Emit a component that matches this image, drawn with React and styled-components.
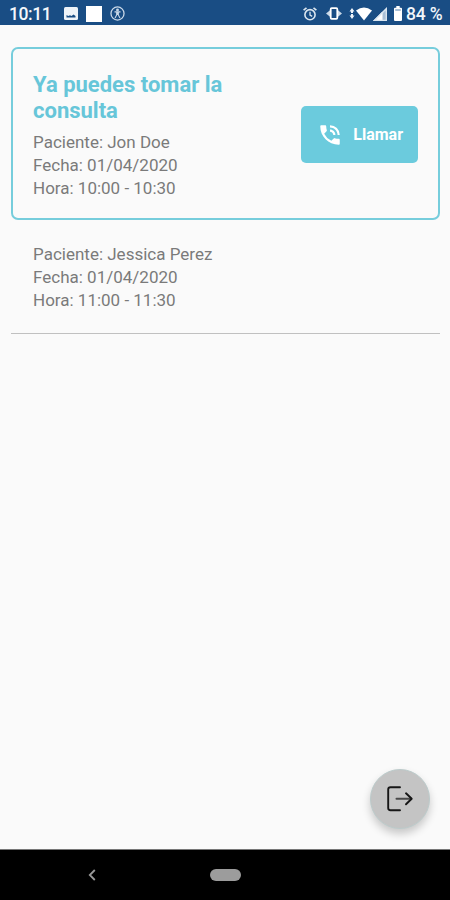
import React from 'react'
import styled, { createGlobalStyle } from 'styled-components'
import { MdPhoneInTalk } from 'react-icons/md'

const GlobalStyle = createGlobalStyle`
  * {
    box-sizing: border-box;
  }

  body {
    margin: 0;
    background: #fafafa;
    font-family: Roboto, sans-serif;
  }
`

const Screen = styled.div`
  display: flex;
  flex-direction: column;
  width: 450px;
  height: 900px;
  overflow: hidden;
  background: #fafafa;
`

const StatusBar = styled.header`
  display: flex;
  align-items: center;
  justify-content: space-between;
  flex: none;
  height: 25px;
  padding: 2px 8px 0 9px;
  background: #194d84;
  color: #f3f7fb;
`

const StatusGroup = styled.div`
  display: flex;
  align-items: center;
`

const StatusText = styled.span`
  width: ${props => props.width}px;
  margin-left: ${props => props.gap || 0}px;
  font-size: 17.5px;
  font-weight: 500;
  line-height: 22px;
  letter-spacing: ${props => props.spacing || 0}px;
  white-space: nowrap;
`

const StatusIcon = styled.svg`
  display: block;
  flex: none;
  margin-left: ${props => props.gap || 0}px;
`

const WhiteSquare = styled.span`
  width: 16px;
  height: 16px;
  margin-left: 8px;
  background: #fff;
`

const Content = styled.main`
  display: flex;
  flex-direction: column;
  flex: 1;
  padding: 22px 10px 20px 11px;
`

const Appointment = styled.section`
  display: flex;
  align-items: center;
  justify-content: space-between;
  flex: none;
  height: ${props => (props.active ? 173 : 114)}px;
  padding: ${props => (props.active ? '1px 20px 0' : '2px 22px 0')};
  border: ${props => (props.active ? '2px solid #76cddc' : 'none')};
  border-bottom: ${props => (!props.active ? '1px solid #c0c0c0' : null)};
  border-radius: ${props => (props.active ? 7 : 0)}px;
`

const Summary = styled.div`
  padding-top: ${props => (props.active ? 4 : 0)}px;
`

const Title = styled.h2`
  width: 220px;
  margin: 0 0 7px;
  color: #67c6d9;
  font-size: 22px;
  font-weight: 700;
  line-height: 26px;
`

const Detail = styled.p`
  margin: 0;
  color: #7a7a7a;
  font-size: 17px;
  line-height: 23.2px;
`

const CallButton = styled.button`
  display: flex;
  align-items: center;
  justify-content: space-between;
  width: 117px;
  height: 57px;
  padding: 1px 15px 0 16px;
  border: 0;
  border-radius: 5px;
  background: #6bcbdd;
  color: #fff;
  font-family: inherit;
  font-size: 16px;
  font-weight: 700;
`

const LogoutButton = styled.button`
  display: flex;
  align-items: center;
  justify-content: center;
  width: 60px;
  height: 60px;
  margin: auto 10px 0 auto;
  padding: 0;
  border: 1px solid #bccbcb;
  border-radius: 50%;
  background: #c4c4c4;
  box-shadow: 0 5px 8px rgba(0, 0, 0, 0.2);
`

const NavBar = styled.nav`
  display: flex;
  align-items: center;
  flex: none;
  height: 51px;
  padding-left: 87px;
  border-top: 1px solid #777;
  background: #000;
`

const HomePill = styled.span`
  width: 31px;
  height: 12px;
  margin-left: 113px;
  border-radius: 6px;
  background: #9c9c9c;
`

const appointments = [
  { patient: 'Jon Doe', date: '01/04/2020', time: '10:00 - 10:30', active: true },
  { patient: 'Jessica Perez', date: '01/04/2020', time: '11:00 - 11:30', active: false },
]

const Status = () => (
  <StatusBar>
    <StatusGroup>
      <StatusText width={55} spacing={-0.4}>
        10:11
      </StatusText>
      <StatusIcon width="14" height="13" viewBox="0 0 14 13">
        <rect width="14" height="13" rx="1.5" fill="#eef3f8" />
        <path d="M2.500 10.500V8l1.800 1 1.700-.8 1.500.8L9.500 7.500l2 1.500v1.500z" fill="#194d84" />
      </StatusIcon>
      <WhiteSquare />
      <StatusIcon gap={8} width="15" height="15" viewBox="0 0 14 14" fill="none" stroke="#c9d8e8">
        <circle cx="7" cy="7" r="6.1" strokeWidth="1.2" />
        <circle cx="7" cy="3.7" r="0.8" fill="#c9d8e8" />
        <path d="M4.2 5.5h5.6M7 5.5v3M6.2 5.5v2.8l-1.5 3M7.8 5.5v2.8l1.5 3" />
      </StatusIcon>
    </StatusGroup>
    <StatusGroup>
      <StatusIcon width="14" height="14" viewBox="0 0 14 14" fill="none" stroke="#dbe6f0">
        <circle cx="7" cy="7.7" r="5.1" strokeWidth="1.6" />
        <path d="M7 4.8v3.3l2.2 1.3" strokeWidth="1.3" />
        <path d="M.6 3.2 3.5.8M13.4 3.2 10.5.8" strokeWidth="1.6" />
      </StatusIcon>
      <StatusIcon gap={9} width="16" height="13" viewBox="0 0 16 13">
        <path d="M4 3.2v6.6L0 6.5zM12 3.2v6.6l4-3.3z" fill="#c9d8e8" />
        <rect x="4.7" y="1.2" width="6.6" height="10.6" rx="1" fill="#194d84" stroke="#fff" strokeWidth="1.8" />
      </StatusIcon>
      <StatusIcon gap={7} width="6" height="14" viewBox="0 0 6 14" fill="#eef3f8">
        <path d="M3 1l2.500 3.500H4v1.500H2V4.500H.5zM3 12l2.500-3.500H4V7H2v1.500H.5z" />
      </StatusIcon>
      <StatusIcon gap={1} width="16" height="14" viewBox="0 0 16 14">
        <path d="M8 13.500 0 3.600Q8-2.600 16 3.600z" fill="#fff" />
      </StatusIcon>
      <StatusIcon gap={1} width="14" height="14" viewBox="0 0 14 14">
        <path d="M14 0v14H0z" fill="#a9bfd6" />
        <path d="M9.500 4.500V14H0z" fill="#fff" />
        <path d="M13.300 1.700v11.600H1.700z" fill="none" stroke="#dbe6f0" strokeWidth="1.300" />
      </StatusIcon>
      <StatusIcon gap={7} width="8" height="15" viewBox="0 0 8 15">
        <path
          d="M2.300 0h3.400v1.700H7a1 1 0 0 1 1 1V14a1 1 0 0 1-1 1H1a1 1 0 0 1-1-1V2.700a1 1 0 0 1 1-1h1.300z"
          fill="#fff"
        />
        <path d="M1.200 3h5.600v2H1.200z" fill="#a9bfd6" />
      </StatusIcon>
      <StatusText width={36} gap={4} spacing={-0.2}>
        84 %
      </StatusText>
    </StatusGroup>
  </StatusBar>
)

const AppointmentItem = props => (
  <Appointment active={props.active}>
    <Summary active={props.active}>
      {props.active && <Title>Ya puedes tomar la consulta</Title>}
      <Detail>Paciente: {props.patient}</Detail>
      <Detail>Fecha: {props.date}</Detail>
      <Detail>Hora: {props.time}</Detail>
    </Summary>
    {props.active && (
      <CallButton>
        <MdPhoneInTalk size={26} />
        Llamar
      </CallButton>
    )}
  </Appointment>
)

const App = () => (
  <>
    <GlobalStyle />
    <Screen>
      <Status />
      <Content>
        {appointments.map(item => (
          <AppointmentItem key={item.patient} {...item} />
        ))}
        <LogoutButton aria-label="Salir">
          <svg
            width="28"
            height="28"
            viewBox="0 0 28 28"
            fill="none"
            stroke="#161616"
            strokeLinecap="round"
            strokeLinejoin="round"
          >
            <path d="M14 2.200H4.500Q2.200 2.200 2.200 4.500v18.500q0 2.200 2.300 2.200H14" strokeWidth="1.900" />
            <path d="M10.500 13.800H25" stroke="#4a4a4a" strokeWidth="2" />
            <path d="m20 8.300 5.700 5.500-5.700 5.500" strokeWidth="1.900" />
          </svg>
        </LogoutButton>
      </Content>
      <NavBar>
        <svg width="10" height="14" viewBox="0 0 10 14" fill="none" stroke="#999" strokeWidth="1.8">
          <path d="M7.800 2 2.800 7l5 5" />
        </svg>
        <HomePill />
      </NavBar>
    </Screen>
  </>
)

export default App
